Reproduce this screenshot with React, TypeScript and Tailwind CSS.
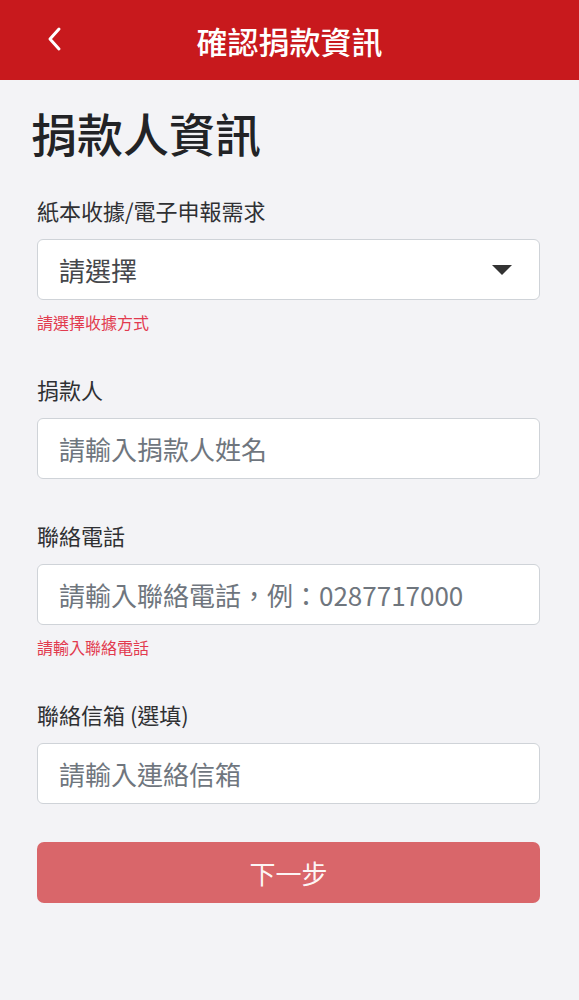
import React from 'react';

const fontStack = '"Noto Sans CJK TC", "Noto Sans", sans-serif';

interface Field {
  label: string;
  placeholder: string;
  error?: string;
  select?: boolean;
}

const fields: Field[] = [
  { label: '紙本收據/電子申報需求', placeholder: '請選擇', error: '請選擇收據方式', select: true },
  { label: '捐款人', placeholder: '請輸入捐款人姓名' },
  { label: '聯絡電話', placeholder: '請輸入聯絡電話，例：0287717000', error: '請輸入聯絡電話' },
  { label: '聯絡信箱 (選填)', placeholder: '請輸入連絡信箱' },
];

export default function App() {
  return (
    <div className="min-h-[1000px] w-[579px] bg-[#f3f3f6]" style={{ fontFamily: fontStack }}>
      <header className="relative flex h-[80px] items-center justify-center bg-[#c8191d]">
        <button className="absolute left-[40px] top-[24px] flex h-[30px] w-[30px] items-center justify-center">
          <svg width="22" height="26" viewBox="0 0 22 26" fill="none">
            <path d="M15 3 L6 13 L15 23" stroke="white" strokeWidth="3" strokeLinecap="round" strokeLinejoin="round" />
          </svg>
        </button>
        <h1 className="text-[31px] font-medium leading-none text-white">確認捐款資訊</h1>
      </header>

      <main className="px-[37px] pt-[24px]">
        <h2 className="-ml-[6px] text-[46px] font-medium leading-[56px] text-[#222326]">捐款人資訊</h2>

        <div className="mt-[35px] flex flex-col">
          {fields.map((f, i) => (
            <div key={f.label} className={i > 0 ? 'mt-[41px]' : ''}>
              <label className="block text-[22px] leading-[30px] text-[#2f3033]">{f.label}</label>
              {f.select ? (
                <div className="mt-[14px] flex h-[61px] w-[503px] items-center justify-between rounded-[6px] border border-[#cfd3d8] bg-white pl-[21px] pr-[27px]">
                  <span className="text-[26px] text-[#45474b]">{f.placeholder}</span>
                  <svg width="20" height="10" viewBox="0 0 20 10">
                    <path d="M0 0 H20 L10 10 Z" fill="#333" />
                  </svg>
                </div>
              ) : (
                <input
                  className="mt-[14px] block h-[61px] w-[503px] rounded-[6px] border border-[#cfd3d8] bg-white pl-[21px] text-[26px] outline-none placeholder:text-[#6f767e]"
                  placeholder={f.placeholder}
                  style={{ fontFamily: fontStack }}
                />
              )}
              {f.error && (
                <p className="mt-[11px] text-[16px] leading-[22px] text-[#e23a4e]">{f.error}</p>
              )}
            </div>
          ))}
        </div>

        <button className="mt-[38px] flex h-[61px] w-[503px] items-center justify-center rounded-[7px] bg-[#d9666a] text-[26px] text-white/95">
          下一步
        </button>
      </main>
    </div>
  );
}
